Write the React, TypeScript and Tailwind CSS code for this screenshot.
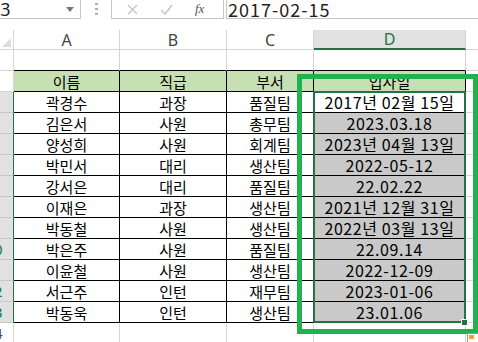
import React from 'react';

const rows = [
  ['곽경수', '과장', '품질팀', '2017년 02월 15일'],
  ['김은서', '사원', '총무팀', '2023.03.18'],
  ['양성희', '사원', '회계팀', '2023년 04월 13일'],
  ['박민서', '대리', '생산팀', '2022-05-12'],
  ['강서은', '대리', '품질팀', '22.02.22'],
  ['이재은', '과장', '생산팀', '2021년 12월 31일'],
  ['박동철', '사원', '생산팀', '2022년 03월 13일'],
  ['박은주', '사원', '품질팀', '22.09.14'],
  ['이윤철', '사원', '생산팀', '2022-12-09'],
  ['서근주', '인턴', '재무팀', '2023-01-06'],
  ['박동욱', '인턴', '생산팀', '23.01.06'],
];

const font = { fontFamily: '"Noto Sans CJK KR", "Noto Sans", sans-serif' };

function RowHead({ n, selected }: { n: number; selected?: boolean }) {
  return (
    <div
      className={`w-[14px] shrink-0 overflow-hidden border-r border-b flex items-center ${
        selected ? 'bg-[#e1e1e1] border-r-[#217346] border-b-[#c8c8c8] text-[#217346]' : 'bg-white border-[#d4d4d4] text-[#444]'
      }`}
    >
      <div className="w-[26px] shrink-0 ml-[-19px] text-center text-[15px] leading-none" style={{ fontFamily: '"Noto Sans", sans-serif' }}>
        {n}
      </div>
    </div>
  );
}

export default function App() {
  return (
    <div className="relative w-[478px] h-[342px] overflow-hidden bg-white text-black" style={font}>
      {/* formula bar */}
      <div className="flex h-[19px]">
        <div className="w-[81px] shrink-0 border-r border-b border-[#c6c6c6] flex items-center overflow-hidden">
          <span className="ml-[-13px] text-[18px] leading-none text-[#222]" style={{ fontFamily: '"Noto Sans", sans-serif' }}>D3</span>
          <svg className="ml-auto mr-[6px]" width="8" height="5" viewBox="0 0 8 5">
            <path d="M0 0h8L4 5z" fill="#777" />
          </svg>
        </div>
        <div className="w-[30px] shrink-0 flex items-center justify-center">
          <svg width="3" height="13" viewBox="0 0 3 13">
            <rect x="0" y="0" width="3" height="2" fill="#b0b0b0" />
            <rect x="0" y="5" width="3" height="2" fill="#b0b0b0" />
            <rect x="0" y="10" width="3" height="2" fill="#b0b0b0" />
          </svg>
        </div>
        <div className="w-[113px] shrink-0 border-x border-b border-[#c6c6c6] flex items-center">
          <svg className="ml-[15px]" width="11" height="11" viewBox="0 0 11 11">
            <path d="M1 1l9 9M10 1l-9 9" stroke="#c4c4c4" strokeWidth="1.3" />
          </svg>
          <svg className="ml-[22px]" width="13" height="11" viewBox="0 0 13 11">
            <path d="M1 6l4 4 7-9" stroke="#c4c4c4" strokeWidth="1.5" fill="none" />
          </svg>
          <span className="ml-[22px] text-[13px] italic text-[#555]" style={{ fontFamily: '"Liberation Serif", serif' }}>fx</span>
        </div>
        <div className="flex-1 ml-[2px] border-l border-b border-[#c6c6c6] flex items-center">
          <span className="ml-[1px] text-[18px] leading-none tracking-[1px] text-[#222]" style={font}>2017-02-15</span>
        </div>
      </div>
      <div className="h-[11px]" />

      {/* column headers */}
      <div className="flex h-[20px] text-[16px] text-[#444]" style={{ fontFamily: '"Noto Sans", sans-serif' }}>
        <div className="w-[14px] shrink-0 border-r border-b border-[#d4d4d4] relative">
          <svg className="absolute right-[2px] bottom-[2px]" width="9" height="9" viewBox="0 0 9 9">
            <path d="M9 0v9H0z" fill="#dcdcdc" />
          </svg>
        </div>
        <div className="w-[106px] shrink-0 border-r border-b border-[#d4d4d4] flex items-center justify-center">A</div>
        <div className="w-[107px] shrink-0 border-r border-b border-[#d4d4d4] flex items-center justify-center">B</div>
        <div className="w-[87px] shrink-0 border-r border-b border-[#d4d4d4] flex items-center justify-center">C</div>
        <div className="w-[152px] shrink-0 border-r border-r-[#d4d4d4] border-b-2 border-b-[#217346] bg-[#e1e1e1] text-[#217346] flex items-center justify-center">D</div>
        <div className="flex-1 border-b border-[#d4d4d4]" />
      </div>

      {/* row 1 */}
      <div className="flex h-[21px]">
        <RowHead n={1} />
        <div className="w-[106px] shrink-0 border-r border-r-[#d4d4d4] border-b border-b-black" />
        <div className="w-[107px] shrink-0 border-r border-r-[#d4d4d4] border-b border-b-black" />
        <div className="w-[87px] shrink-0 border-r border-r-[#d4d4d4] border-b border-b-black" />
        <div className="w-[152px] shrink-0 border-r border-r-[#d4d4d4] border-b border-b-black" />
        <div className="flex-1 border-b border-[#d4d4d4]" />
      </div>

      {/* row 2: header */}
      <div className="flex h-[21px] text-[15px] leading-none">
        <RowHead n={2} />
        {['이름', '직급', '부서', '입사일'].map((t, i) => (
          <div
            key={t}
            className={`${['w-[106px]', 'w-[107px]', 'w-[87px]', 'w-[152px]'][i]} shrink-0 border-r border-b border-black bg-[#c6e0b4] flex items-center justify-center`}
          >
            {t}
          </div>
        ))}
        <div className="flex-1 border-b border-[#d4d4d4]" />
      </div>

      {/* data rows */}
      {rows.map((r, idx) => (
        <div key={idx} className="flex h-[21px] text-[15px] leading-none">
          <RowHead n={idx + 3} selected />
          <div className="w-[106px] shrink-0 border-r border-b border-black flex items-center justify-center">{r[0]}</div>
          <div className="w-[107px] shrink-0 border-r border-b border-black flex items-center justify-center">{r[1]}</div>
          <div className="w-[87px] shrink-0 border-r border-b border-black flex items-center justify-center">{r[2]}</div>
          <div
            className={`w-[152px] shrink-0 border-r border-b border-black flex items-center justify-center text-[16px] tracking-[0.6px] ${
              idx === 0 ? 'bg-white' : 'bg-[#c9c9c9]'
            }`}
          >
            {r[3]}
          </div>
          <div className="flex-1 border-b border-[#d4d4d4]" />
        </div>
      ))}

      {/* row 14 */}
      <div className="flex h-[21px]">
        <RowHead n={14} />
        <div className="w-[106px] shrink-0 border-r border-b border-[#d4d4d4]" />
        <div className="w-[107px] shrink-0 border-r border-b border-[#d4d4d4]" />
        <div className="w-[87px] shrink-0 border-r border-b border-[#d4d4d4]" />
        <div className="w-[152px] shrink-0 border-r border-b border-[#d4d4d4]" />
        <div className="flex-1 border-b border-[#d4d4d4]" />
      </div>

      {/* excel selection */}
      <div className="absolute left-[313px] top-[91px] w-[153px] h-[232px] border-2 border-[#217346] pointer-events-none" />
      <div className="absolute left-[461px] top-[319px] w-[7px] h-[7px] bg-[#217346] border border-white" />

      {/* annotation box */}
      <div className="absolute left-[297px] top-[74px] w-[181px] h-[260px] border-[5px] border-[#22b14c] pointer-events-none" />

      {/* quick analysis icon */}
      <div className="absolute left-[467px] top-[333px] w-[14px] h-[14px] border border-[#999] bg-white">
        <div className="absolute left-[1px] top-[1px] w-[5px] h-[4px] bg-[#e8a33b]" />
      </div>
    </div>
  );
}
